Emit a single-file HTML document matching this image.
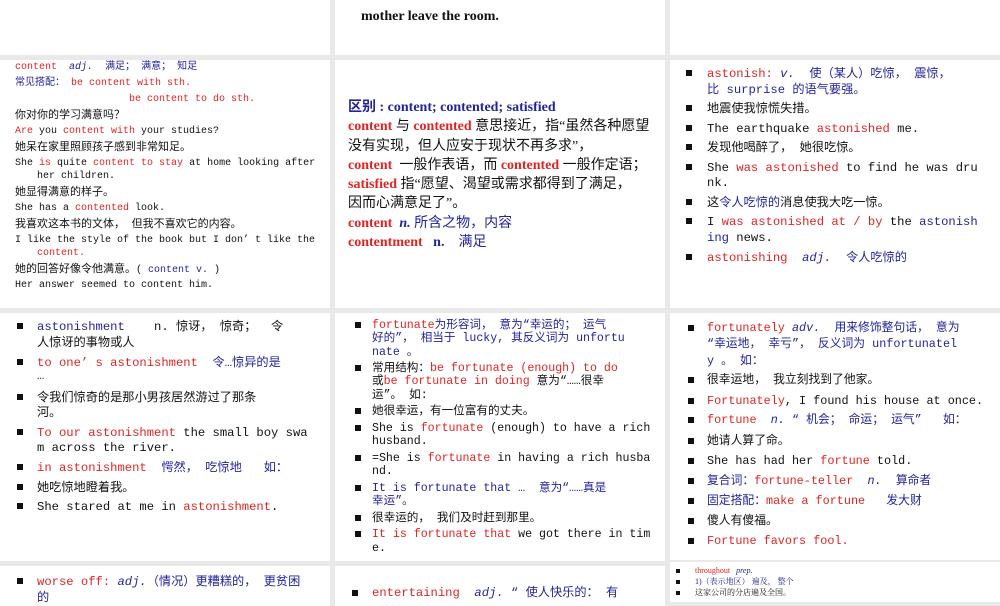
<!DOCTYPE html>
<html><head><meta charset="utf-8"><style>
*{margin:0;padding:0}
body{width:1000px;height:600px;background:#e9e9e9;position:relative;overflow:hidden;font-family:"Liberation Mono","Noto Sans CJK SC",monospace;color:#111}
.p{position:absolute;background:#fff}
.l{position:absolute;white-space:pre;line-height:1}
.b{position:absolute;width:6px;height:6px;background:#111}
.r{color:#e02424}.u{color:#23239a}.i{font-style:italic}
.s1 .l{font-size:10px}
.s3 .l{font-size:12.2px}
.s3 .n{font-size:11.8px}
.s4 .l{font-size:11.6px}
.sv{font-family:"Liberation Serif","Noto Sans CJK SC",serif;font-weight:bold;font-size:14px}
.c{font-size:1.1em}
</style></head><body>
<div class="p" style="left:0;top:0;width:330px;height:55px"></div>
<div class="p" style="left:335px;top:0;width:330px;height:55px"></div>
<div class="p" style="left:670px;top:0;width:330px;height:55px"></div>
<div class="p" style="left:0;top:60px;width:330px;height:248px"></div>
<div class="p" style="left:335px;top:60px;width:330px;height:248px"></div>
<div class="p" style="left:670px;top:60px;width:330px;height:248px"></div>
<div class="p" style="left:0;top:313px;width:330px;height:248px"></div>
<div class="p" style="left:335px;top:313px;width:330px;height:248px"></div>
<div class="p" style="left:670px;top:313px;width:330px;height:247px"></div>
<div class="p" style="left:0;top:566px;width:330px;height:40px"></div>
<div class="p" style="left:335px;top:566px;width:330px;height:40px"></div>
<div class="p" style="left:670px;top:562px;width:330px;height:40px"></div>

<div class="l sv" style="left:361px;top:10px">mother leave the room.</div>

<div class="s1">
<div class="l" style="left:15px;top:63px"><span class="r">content</span>  <span class="u i">adj.</span>  <span class="u">满足； 满意； 知足</span></div>
<div class="l u" style="left:15px;top:79px">常见搭配： <span class="r">be content with sth.</span></div>
<div class="l r" style="left:129px;top:95px">be content to do sth.</div>
<div class="l" style="left:15px;top:111px"><span class="c">你对你的学习满意吗？</span></div>
<div class="l" style="left:15px;top:127px"><span class="r">Are</span> you <span class="r">content with</span> your studies?</div>
<div class="l" style="left:15px;top:143px"><span class="c">她呆在家里照顾孩子感到非常知足。</span></div>
<div class="l" style="left:15px;top:159px">She <span class="r">is</span> quite <span class="r">content to stay</span> at home looking after</div>
<div class="l" style="left:37px;top:172px">her children.</div>
<div class="l" style="left:15px;top:188px"><span class="c">她显得满意的样子。</span></div>
<div class="l" style="left:15px;top:204px">She has a <span class="r">contented</span> look.</div>
<div class="l" style="left:15px;top:220px"><span class="c">我喜欢这本书的文体， 但我不喜欢它的内容。</span></div>
<div class="l" style="left:15px;top:236px">I like the style of the book but I don’ t like the</div>
<div class="l r" style="left:37px;top:249px">content.</div>
<div class="l" style="left:15px;top:265px"><span class="c">她的回答好像令他满意。</span>( <span class="u">content v.</span> )</div>
<div class="l" style="left:15px;top:281px">Her answer seemed to content him.</div>
</div>

<div class="l sv u" style="left:348px;top:101px">区别 : content; contented; satisfied</div>
<div class="l sv" style="left:348px;top:120px"><span class="r">content</span> <span style="font-weight:normal">与</span> <span class="r">contented</span> <span style="font-weight:normal">意思接近，指“虽然各种愿望</span></div>
<div class="l sv" style="left:348px;top:140px;font-weight:normal">没有实现，但人应安于现状不再多求”，</div>
<div class="l sv" style="left:348px;top:159px"><span class="r">content</span>  <span style="font-weight:normal">一般作表语，而</span> <span class="r">contented</span> <span style="font-weight:normal">一般作定语；</span></div>
<div class="l sv" style="left:348px;top:178px"><span class="r">satisfied</span> <span style="font-weight:normal">指“愿望、渴望或需求都得到了满足，</span></div>
<div class="l sv" style="left:348px;top:197px;font-weight:normal">因而心满意足了”。</div>
<div class="l sv" style="left:348px;top:217px"><span class="r">content</span>  <span class="u"><i>n.</i> <span style="font-weight:normal">所含之物，内容</span></span></div>
<div class="l sv" style="left:348px;top:236px"><span class="r">contentment</span>   <span class="u">n.    <span style="font-weight:normal">满足</span></span></div>

<div class="s3">
<div class="b" style="left:686px;top:70px"></div><div class="l" style="left:707px;top:68px"><span class="r">astonish:</span> <span class="u"><i>v.</i>  使（某人）吃惊， 震惊，</span></div>
<div class="l u" style="left:707px;top:84px">比 surprise 的语气要强。</div>
<div class="b" style="left:686px;top:105px"></div><div class="l" style="left:707px;top:103px">地震使我惊慌失措。</div>
<div class="b" style="left:686px;top:125px"></div><div class="l" style="left:707px;top:123px">The earthquake <span class="r">astonished</span> me.</div>
<div class="b" style="left:686px;top:144px"></div><div class="l" style="left:707px;top:142px">发现他喝醉了， 她很吃惊。</div>
<div class="b" style="left:686px;top:164px"></div><div class="l" style="left:707px;top:162px">She <span class="r">was astonished</span> to find he was dru</div>
<div class="l" style="left:707px;top:177px">nk.</div>
<div class="b" style="left:686px;top:199px"></div><div class="l" style="left:707px;top:197px">这<span class="u">令人吃惊的</span>消息使我大吃一惊。</div>
<div class="b" style="left:686px;top:218px"></div><div class="l" style="left:707px;top:216px">I <span class="r">was astonished at / by</span> the <span class="u">astonish</span></div>
<div class="l" style="left:707px;top:232px"><span class="u">ing</span> news.</div>
<div class="b" style="left:686px;top:254px"></div><div class="l" style="left:707px;top:252px"><span class="r">astonishing</span>  <span class="u"><i>adj.</i>  令人吃惊的</span></div>

<div class="b" style="left:17px;top:323px"></div><div class="l" style="left:37px;top:321px"><span class="u">astonishment</span>    n. 惊讶， 惊奇；  令</div>
<div class="l" style="left:37px;top:337px">人惊讶的事物或人</div>
<div class="b" style="left:17px;top:359px"></div><div class="l" style="left:37px;top:357px"><span class="r">to one’ s astonishment</span>  <span class="u">令…惊异的是</span></div>
<div class="l u" style="left:37px;top:370px">…</div>
<div class="b" style="left:17px;top:394px"></div><div class="l" style="left:37px;top:392px">令我们惊奇的是那小男孩居然游过了那条</div>
<div class="l" style="left:37px;top:407px">河。</div>
<div class="b" style="left:17px;top:429px"></div><div class="l" style="left:37px;top:427px"><span class="r">To our astonishment</span> the small boy swa</div>
<div class="l" style="left:37px;top:442px">m across the river.</div>
<div class="b" style="left:17px;top:464px"></div><div class="l" style="left:37px;top:462px"><span class="r">in astonishment</span>  <span class="u">愕然， 吃惊地   如：</span></div>
<div class="b" style="left:17px;top:484px"></div><div class="l" style="left:37px;top:482px">她吃惊地瞪着我。</div>
<div class="b" style="left:17px;top:503px"></div><div class="l" style="left:37px;top:501px">She stared at me in <span class="r">astonishment</span>.</div>

<div class="b" style="left:17px;top:578px"></div><div class="l" style="left:37px;top:576px"><span class="r">worse off:</span> <span class="u"><i>adj.</i>（情况）更糟糕的， 更贫困</span></div>
<div class="l u" style="left:37px;top:592px">的</div>

<div class="b" style="left:688px;top:325px"></div><div class="l n" style="left:707px;top:323px"><span class="r">fortunately</span> <span class="u"><i>adv.</i>  用来修饰整句话， 意为</span></div>
<div class="l u n" style="left:707px;top:339px">“幸运地， 幸亏”， 反义词为 unfortunatel</div>
<div class="l u n" style="left:707px;top:356px">y 。 如：</div>
<div class="b" style="left:688px;top:377px"></div><div class="l n" style="left:707px;top:375px">很幸运地， 我立刻找到了他家。</div>
<div class="b" style="left:688px;top:398px"></div><div class="l n" style="left:707px;top:396px"><span class="r">Fortunately</span>, I found his house at once.</div>
<div class="b" style="left:688px;top:417px"></div><div class="l n" style="left:707px;top:415px"><span class="r">fortune</span>  <span class="u"><i>n.</i> “ 机会； 命运； 运气”   如：</span></div>
<div class="b" style="left:688px;top:438px"></div><div class="l n" style="left:707px;top:436px">她请人算了命。</div>
<div class="b" style="left:688px;top:458px"></div><div class="l n" style="left:707px;top:456px">She has had her <span class="r">fortune</span> told.</div>
<div class="b" style="left:688px;top:478px"></div><div class="l n" style="left:707px;top:476px"><span class="u">复合词：</span><span class="r">fortune-teller</span>  <span class="u"><i>n.</i>  算命者</span></div>
<div class="b" style="left:688px;top:498px"></div><div class="l n" style="left:707px;top:496px"><span class="u">固定搭配：</span><span class="r">make a fortune</span>   <span class="u">发大财</span></div>
<div class="b" style="left:688px;top:518px"></div><div class="l n" style="left:707px;top:516px">傻人有傻福。</div>
<div class="b" style="left:688px;top:538px"></div><div class="l r n" style="left:707px;top:536px">Fortune favors fool.</div>

<div class="b" style="left:352px;top:590px"></div><div class="l" style="left:372px;top:587px"><span class="r">entertaining</span>  <span class="u"><i>adj.</i> “ 使人快乐的： 有</span></div>
</div>

<div class="s4">
<div class="b" style="left:355px;top:322px"></div><div class="l" style="left:372px;top:320px"><span class="r">fortunate</span><span class="u">为形容词， 意为“幸运的； 运气</span></div>
<div class="l u" style="left:372px;top:333px">好的”， 相当于 lucky, 其反义词为 unfortu</div>
<div class="l u" style="left:372px;top:347px">nate 。</div>
<div class="b" style="left:355px;top:365px"></div><div class="l" style="left:372px;top:363px">常用结构：<span class="r">be fortunate (enough) to do</span></div>
<div class="l" style="left:372px;top:376px">或<span class="r">be fortunate in doing</span> 意为“……很幸</div>
<div class="l" style="left:372px;top:390px">运”。 如:</div>
<div class="b" style="left:355px;top:408px"></div><div class="l" style="left:372px;top:406px">她很幸运，有一位富有的丈夫。</div>
<div class="b" style="left:355px;top:425px"></div><div class="l" style="left:372px;top:423px">She is <span class="r">fortunate</span> (enough) to have a rich</div>
<div class="l" style="left:372px;top:436px">husband.</div>
<div class="b" style="left:355px;top:455px"></div><div class="l" style="left:372px;top:453px">=She is <span class="r">fortunate</span> in having a rich husba</div>
<div class="l" style="left:372px;top:466px">nd.</div>
<div class="b" style="left:355px;top:485px"></div><div class="l u" style="left:372px;top:483px">It is fortunate that …  意为“……真是</div>
<div class="l u" style="left:372px;top:496px">幸运”。</div>
<div class="b" style="left:355px;top:515px"></div><div class="l" style="left:372px;top:513px">很幸运的， 我们及时赶到那里。</div>
<div class="b" style="left:355px;top:531px"></div><div class="l" style="left:372px;top:529px"><span class="r">It is fortunate that</span> we got there in tim</div>
<div class="l" style="left:372px;top:543px">e.</div>
</div>

<div class="b" style="left:676px;top:569px;width:4px;height:4px"></div><div class="l" style="left:695px;top:567px;font-size:8px;font-family:'Liberation Serif','Noto Serif CJK SC',serif"><span class="r">throughout</span>   <span class="u i">prep.</span></div>
<div class="b" style="left:676px;top:580px;width:4px;height:4px"></div><div class="l u" style="left:695px;top:578px;font-size:8px;font-family:'Liberation Serif','Noto Serif CJK SC',serif">1)（表示地区） 遍及， 整个</div>
<div class="b" style="left:676px;top:591px;width:4px;height:4px"></div><div class="l" style="left:695px;top:589px;font-size:8px;font-family:'Liberation Serif','Noto Serif CJK SC',serif">这家公司的分店遍及全国。</div>
</body></html>
